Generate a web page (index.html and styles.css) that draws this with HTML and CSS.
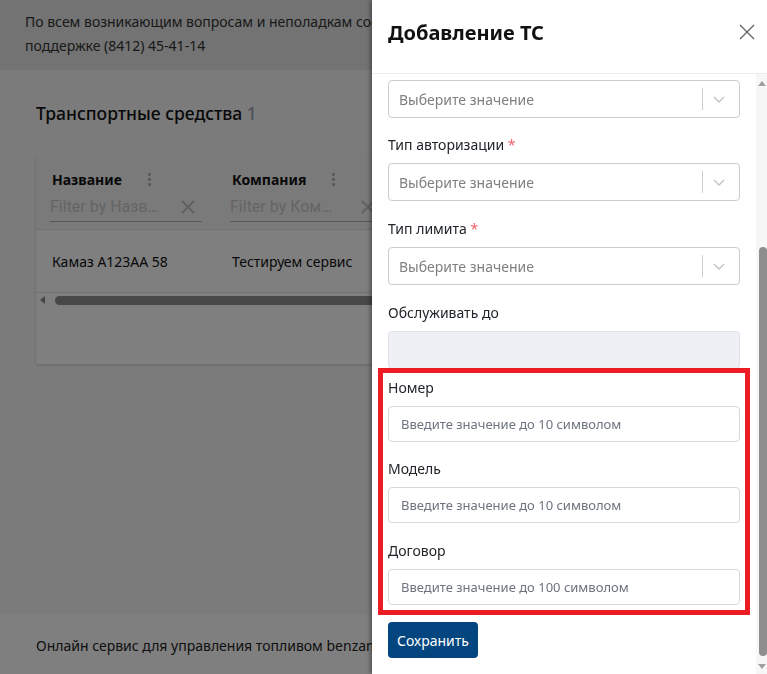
FILE: index.html
```html
<!DOCTYPE html>
<html lang="ru">
<head>
<meta charset="utf-8">
<title>Добавление ТС</title>
<link rel="stylesheet" href="styles.css">
</head>
<body>
<div class="page">
  <header class="topbar">
    <p class="topbar-text">По всем возникающим вопросам и неполадкам сообщайте службе технической<br>поддержке (8412) 45-41-14</p>
  </header>
  <main class="main">
    <h1 class="title">Транспортные средства <span class="count">1</span></h1>
    <div class="card">
      <div class="grid-head">
        <div class="col">
          <div class="col-title"><span>Название</span><span class="kebab"></span></div>
          <div class="filter"><span>Filter by Назв…</span>
            <svg class="fx" width="14" height="14" viewBox="0 0 14 14"><path d="M1 1L13 13M13 1L1 13"/></svg>
          </div>
        </div>
        <div class="col">
          <div class="col-title"><span>Компания</span><span class="kebab"></span></div>
          <div class="filter"><span>Filter by Ком…</span>
            <svg class="fx" width="14" height="14" viewBox="0 0 14 14"><path d="M1 1L13 13M13 1L1 13"/></svg>
          </div>
        </div>
      </div>
      <div class="grid-row">
        <div class="cell">Камаз А123АА 58</div>
        <div class="cell">Тестируем сервис</div>
      </div>
      <div class="hscroll"><span class="hs-left"></span><span class="hs-thumb"></span></div>
    </div>
  </main>
  <footer class="footer"><p class="footer-text">Онлайн сервис для управления топливом benzamat</p></footer>
</div>

<div class="overlay"></div>

<aside class="drawer">
  <div class="drawer-head">
    <h2 class="drawer-title">Добавление ТС</h2>
    <button class="close" type="button" aria-label="Закрыть">
      <svg width="16" height="16" viewBox="0 0 16 16"><path d="M1 1L15 15M15 1L1 15"/></svg>
    </button>
  </div>
  <div class="drawer-body">
    <div class="form">
      <div class="field">
        <div class="select">
          <span class="select-value">Выберите значение</span>
          <span class="select-sep"></span>
          <span class="select-arrow"><svg width="12" height="7" viewBox="0 0 12 7"><path d="M1 1l5 5 5-5"/></svg></span>
        </div>
      </div>
      <div class="field">
        <label class="label">Тип авторизации <span class="req">*</span></label>
        <div class="select">
          <span class="select-value">Выберите значение</span>
          <span class="select-sep"></span>
          <span class="select-arrow"><svg width="12" height="7" viewBox="0 0 12 7"><path d="M1 1l5 5 5-5"/></svg></span>
        </div>
      </div>
      <div class="field">
        <label class="label">Тип лимита <span class="req">*</span></label>
        <div class="select">
          <span class="select-value">Выберите значение</span>
          <span class="select-sep"></span>
          <span class="select-arrow"><svg width="12" height="7" viewBox="0 0 12 7"><path d="M1 1l5 5 5-5"/></svg></span>
        </div>
      </div>
      <div class="field field-tight">
        <label class="label">Обслуживать до</label>
        <input class="input input-disabled" type="text" disabled>
      </div>
      <div class="group">
        <div class="field">
          <label class="label">Номер</label>
          <input class="input" type="text" placeholder="Введите значение до 10 символом">
        </div>
        <div class="field">
          <label class="label">Модель</label>
          <input class="input" type="text" placeholder="Введите значение до 10 символом">
        </div>
        <div class="field">
          <label class="label">Договор</label>
          <input class="input" type="text" placeholder="Введите значение до 100 символом">
        </div>
      </div>
      <button class="save" type="button">Сохранить</button>
    </div>
    <div class="vscroll">
      <span class="vs-up"></span>
      <span class="vs-thumb"></span>
      <span class="vs-down"></span>
    </div>
  </div>
</aside>
</body>
</html>
```
FILE: styles.css
```css
* { box-sizing: border-box; margin: 0; padding: 0; }
html, body { height: 100%; }
body {
  font-family: "Noto Sans", "DejaVu Sans", sans-serif;
  font-size: 14px;
  color: #212529;
  background: #fff;
  overflow: hidden;
}

/* background page */
.page { display: flex; flex-direction: column; height: 674px; }
.topbar {
  background: #e6e6e6;
  height: 70px;
  padding: 10px 25px 0;
  line-height: 24px;
  white-space: nowrap;
  color: #333;
}
.main { flex: 1; background: #f7f7f7; padding: 30px 36px 0; }
.title { font-size: 17.5px; font-weight: 500; line-height: 26px; margin-bottom: 29px; color: #111; }
.count { color: #9aa3b2; }
.card {
  background: #fff;
  height: 209px;
  box-shadow: 0 1px 3px rgba(0,0,0,.18);
  border-radius: 2px;
}
.grid-head { display: flex; background: #f4f4f4; height: 75px; border-bottom: 1px solid #e2e2e2; }
.col { width: 180px; padding: 14px 0 0 14px; }
.col-title { display: flex; align-items: center; height: 20px; font-weight: 700; padding-left: 2px; color: #111; }
.kebab {
  margin-left: 26px;
  width: 3px; height: 15px;
  background: radial-gradient(circle, #b0b0b0 1.3px, transparent 1.6px) 0 0 / 3px 5px repeat-y;
}
.filter {
  width: 152px; height: 30px; margin-top: 3px;
  border-bottom: 1px solid #b0b0b0;
  display: flex; align-items: center; justify-content: space-between;
  padding-right: 7px;
  font-family: Roboto, "Liberation Sans", sans-serif;
  font-size: 16px;
  color: #cacaca;
}
.fx path { stroke: #c0c0c0; stroke-width: 2; fill: none; }
.grid-row { display: flex; height: 63px; border-bottom: 1px solid #e2e2e2; align-items: center; }
.cell { width: 180px; padding-left: 16px; color: #111; }
.hscroll { display: flex; align-items: center; height: 14px; padding-left: 4px; }
.hs-left { width: 0; height: 0; border-top: 4px solid transparent; border-bottom: 4px solid transparent; border-right: 5px solid #8c8c8c; }
.hs-thumb { flex: 1; height: 9px; margin-left: 10px; background: #909090; border-radius: 5px; }
.footer { height: 59px; background: #fff; padding: 21px 36px 0; line-height: 20px; color: #222; white-space: nowrap; }

.overlay { position: fixed; inset: 0; background: rgba(0,0,0,.5); }

/* drawer */
.drawer {
  position: fixed; top: 0; right: 0;
  width: 395px; height: 674px;
  background: #fff;
  box-shadow: -2px 0 4px rgba(0,0,0,.35);
  display: flex; flex-direction: column;
}
.drawer-head {
  height: 74px; flex: none;
  border-bottom: 1px solid #ececec;
  display: flex; align-items: flex-start; justify-content: space-between;
  padding: 19px 12px 0 16px;
}
.drawer-title { font-size: 20px; font-weight: 700; line-height: 28px; color: #111; }
.close { background: none; border: 0; margin-top: 5px; width: 16px; height: 16px; display: flex; }
.close path { stroke: #666; stroke-width: 1.4; fill: none; }

.drawer-body { flex: 1; display: flex; min-height: 0; }
.form { flex: 1; padding: 6px 16px 0; overflow: hidden; }
.field { margin-bottom: 18px; }
.field:first-child { margin-bottom: 17px; }
.field-tight { margin-bottom: 9px; }
.label { display: block; line-height: 20px; margin-bottom: 8px; color: #212529; }
.req { color: #f0616b; }
.select {
  height: 38px;
  border: 1px solid #cdcdcd;
  border-radius: 4px;
  display: flex; align-items: center;
}
.select-value { flex: 1; padding-left: 10px; color: #808080; }
.select-sep { width: 1px; height: 22px; background: #cdcdcd; }
.select-arrow { width: 36px; padding-right: 4px; display: flex; justify-content: center; }
.select-arrow path { stroke: #c6c6c6; stroke-width: 1.5; fill: none; }
.input {
  display: block; width: 100%;
  height: 36px;
  border: 1px solid #d5d8dd;
  border-radius: 4px;
  padding-left: 12px;
  font-family: "Noto Sans", "DejaVu Sans", sans-serif;
  font-size: 13px;
  color: #212529;
  background: #fff;
  outline: none;
}
.input::placeholder { color: #6c737e; }
.input-disabled { height: 38px; background: #eef0f5; border-color: #dfe2e8; }
.group { outline: 5px solid #ed1c24; outline-offset: 5px; margin-bottom: 17px; }
.group .field:last-child { margin-bottom: 0; }
.save {
  height: 36px; padding: 0 9px;
  background: #03467f; color: #fff;
  border: 0; border-radius: 4px;
  font-family: "Noto Sans", "DejaVu Sans", sans-serif;
  font-size: 14px; font-weight: 400;
}

.vscroll { width: 11px; flex: none; background: #f7f7f7; display: flex; flex-direction: column; align-items: center; }
.vs-up { margin-top: 7px; width: 0; height: 0; border-left: 4px solid transparent; border-right: 4px solid transparent; border-bottom: 5px solid #a0a0a0; }
.vs-thumb { margin-top: 161px; align-self: flex-end; width: 8px; height: 409px; background: #8e8e8e; border-radius: 4px; }
.vs-down { margin-top: 8px; width: 0; height: 0; border-left: 4px solid transparent; border-right: 4px solid transparent; border-top: 5px solid #a0a0a0; }
```
